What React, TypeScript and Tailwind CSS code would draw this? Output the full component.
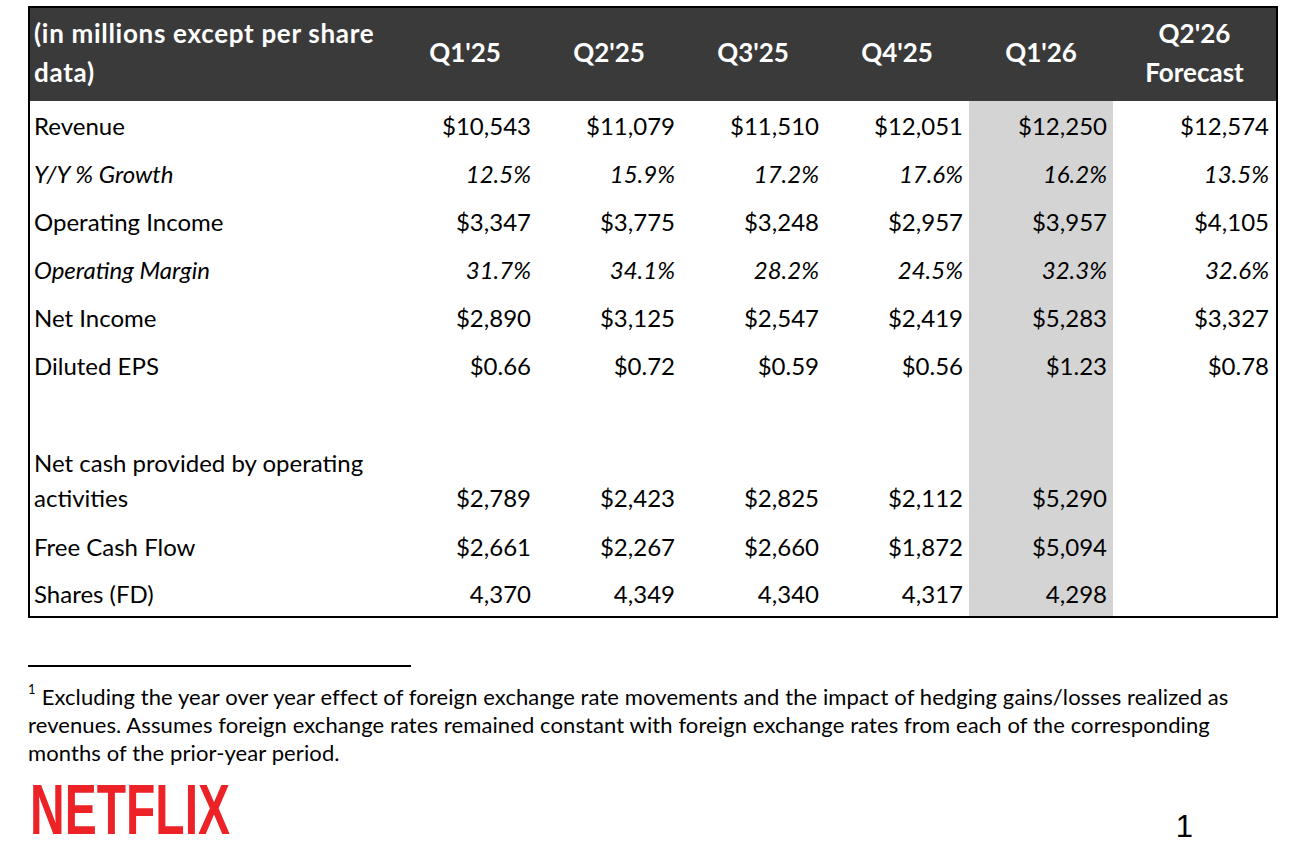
const cols = "grid grid-cols-[363px_144px_144px_144px_144px_144px_163px]";

type Row = {
  label: React.ReactNode;
  values: string[];
  italic?: boolean;
  h: string;
  tall?: boolean;
};

const rows: Row[] = [
  { label: 'Revenue', values: ['$10,543', '$11,079', '$11,510', '$12,051', '$12,250', '$12,574'], h: 'h-[48px]' },
  { label: 'Y/Y % Growth', italic: true, values: ['12.5%', '15.9%', '17.2%', '17.6%', '16.2%', '13.5%'], h: 'h-[48px]' },
  { label: 'Operating Income', values: ['$3,347', '$3,775', '$3,248', '$2,957', '$3,957', '$4,105'], h: 'h-[48px]' },
  { label: 'Operating Margin', italic: true, values: ['31.7%', '34.1%', '28.2%', '24.5%', '32.3%', '32.6%'], h: 'h-[48px]' },
  { label: 'Net Income', values: ['$2,890', '$3,125', '$2,547', '$2,419', '$5,283', '$3,327'], h: 'h-[48px]' },
  { label: 'Diluted EPS', values: ['$0.66', '$0.72', '$0.59', '$0.56', '$1.23', '$0.78'], h: 'h-[48px]' },
  { label: '', values: ['', '', '', '', '', ''], h: 'h-[48px]' },
  {
    label: (
      <>
        Net cash provided by operating
        <br />
        activities
      </>
    ),
    values: ['$2,789', '$2,423', '$2,825', '$2,112', '$5,290', ''],
    h: 'h-[85px]',
    tall: true,
  },
  { label: 'Free Cash Flow', values: ['$2,661', '$2,267', '$2,660', '$1,872', '$5,094', ''], h: 'h-[48px]' },
  { label: 'Shares (FD)', values: ['4,370', '4,349', '4,340', '4,317', '4,298', ''], h: 'h-[46px]' },
];

const headers = ["Q1'25", "Q2'25", "Q3'25", "Q4'25", "Q1'26"];

export default function App() {
  return (
    <div className="min-h-screen w-[1302px] bg-white text-black font-['Lato','Liberation_Sans',sans-serif]">
      <div className="pt-[6px] pl-[28px]">
        {/* Table */}
        <div className="w-[1250px] border-2 border-black">
          <div className={`${cols} h-[93px] pb-[4px] bg-[#3a3a3a] text-white font-bold text-[26px] leading-[39px]`}>
            <div className="flex items-center pl-[4px] whitespace-nowrap tracking-[0.7px]">
              <span>
                (in millions except per share
                <br />
                data)
              </span>
            </div>
            {headers.map(h => (
              <div key={h} className="flex items-center justify-center">{h}</div>
            ))}
            <div className="flex items-center justify-center text-center">
              <span>
                Q2'26
                <br />
                Forecast
              </span>
            </div>
          </div>

          {rows.map((r, i) => (
            <div key={i} className={`${cols} ${r.h} text-[24px] leading-[35px] ${r.italic ? 'italic' : ''}`}>
              <div className={`flex pl-[4px] whitespace-nowrap ${r.tall ? 'items-end pb-[7px]' : 'items-center'}`}>
                <span>{r.label}</span>
              </div>
              {r.values.map((v, j) => (
                <div
                  key={j}
                  className={`flex justify-end ${j === 5 ? 'pr-[7px]' : 'pr-[6px]'} ${j === 4 ? 'bg-[#d4d4d4]' : ''} ${r.tall ? 'items-end pb-[7px]' : 'items-center'}`}
                >
                  {v}
                </div>
              ))}
            </div>
          ))}
        </div>

        {/* Footnote */}
        <div className="mt-[47px] w-[383px] h-[2px] bg-black" />
        <p className="mt-[16px] text-[22px] leading-[28px] whitespace-nowrap tracking-[0.1px]">
          <sup className="text-[13px] align-[5px] mr-[6px]">1</sup>
          Excluding the year over year effect of foreign exchange rate movements and the impact of hedging gains/losses realized as
          <br />
          revenues. Assumes foreign exchange rates remained constant with foreign exchange rates from each of the corresponding
          <br />
          months of the prior-year period.
        </p>

        {/* Footer */}
        <div className="mt-[8px] flex items-start justify-between pr-[109px]">
          <div className="h-[72px] pl-[2px]">
            <span className="inline-block origin-top scale-y-[1.48] font-['Liberation_Sans',Arial,sans-serif] font-bold text-[48px] leading-none text-[#ec2227]">
              NETFLIX
            </span>
          </div>
          <div className="pt-[36px] font-['Liberation_Sans',Arial,sans-serif] text-[31px] leading-none">1</div>
        </div>
      </div>
    </div>
  );
}
